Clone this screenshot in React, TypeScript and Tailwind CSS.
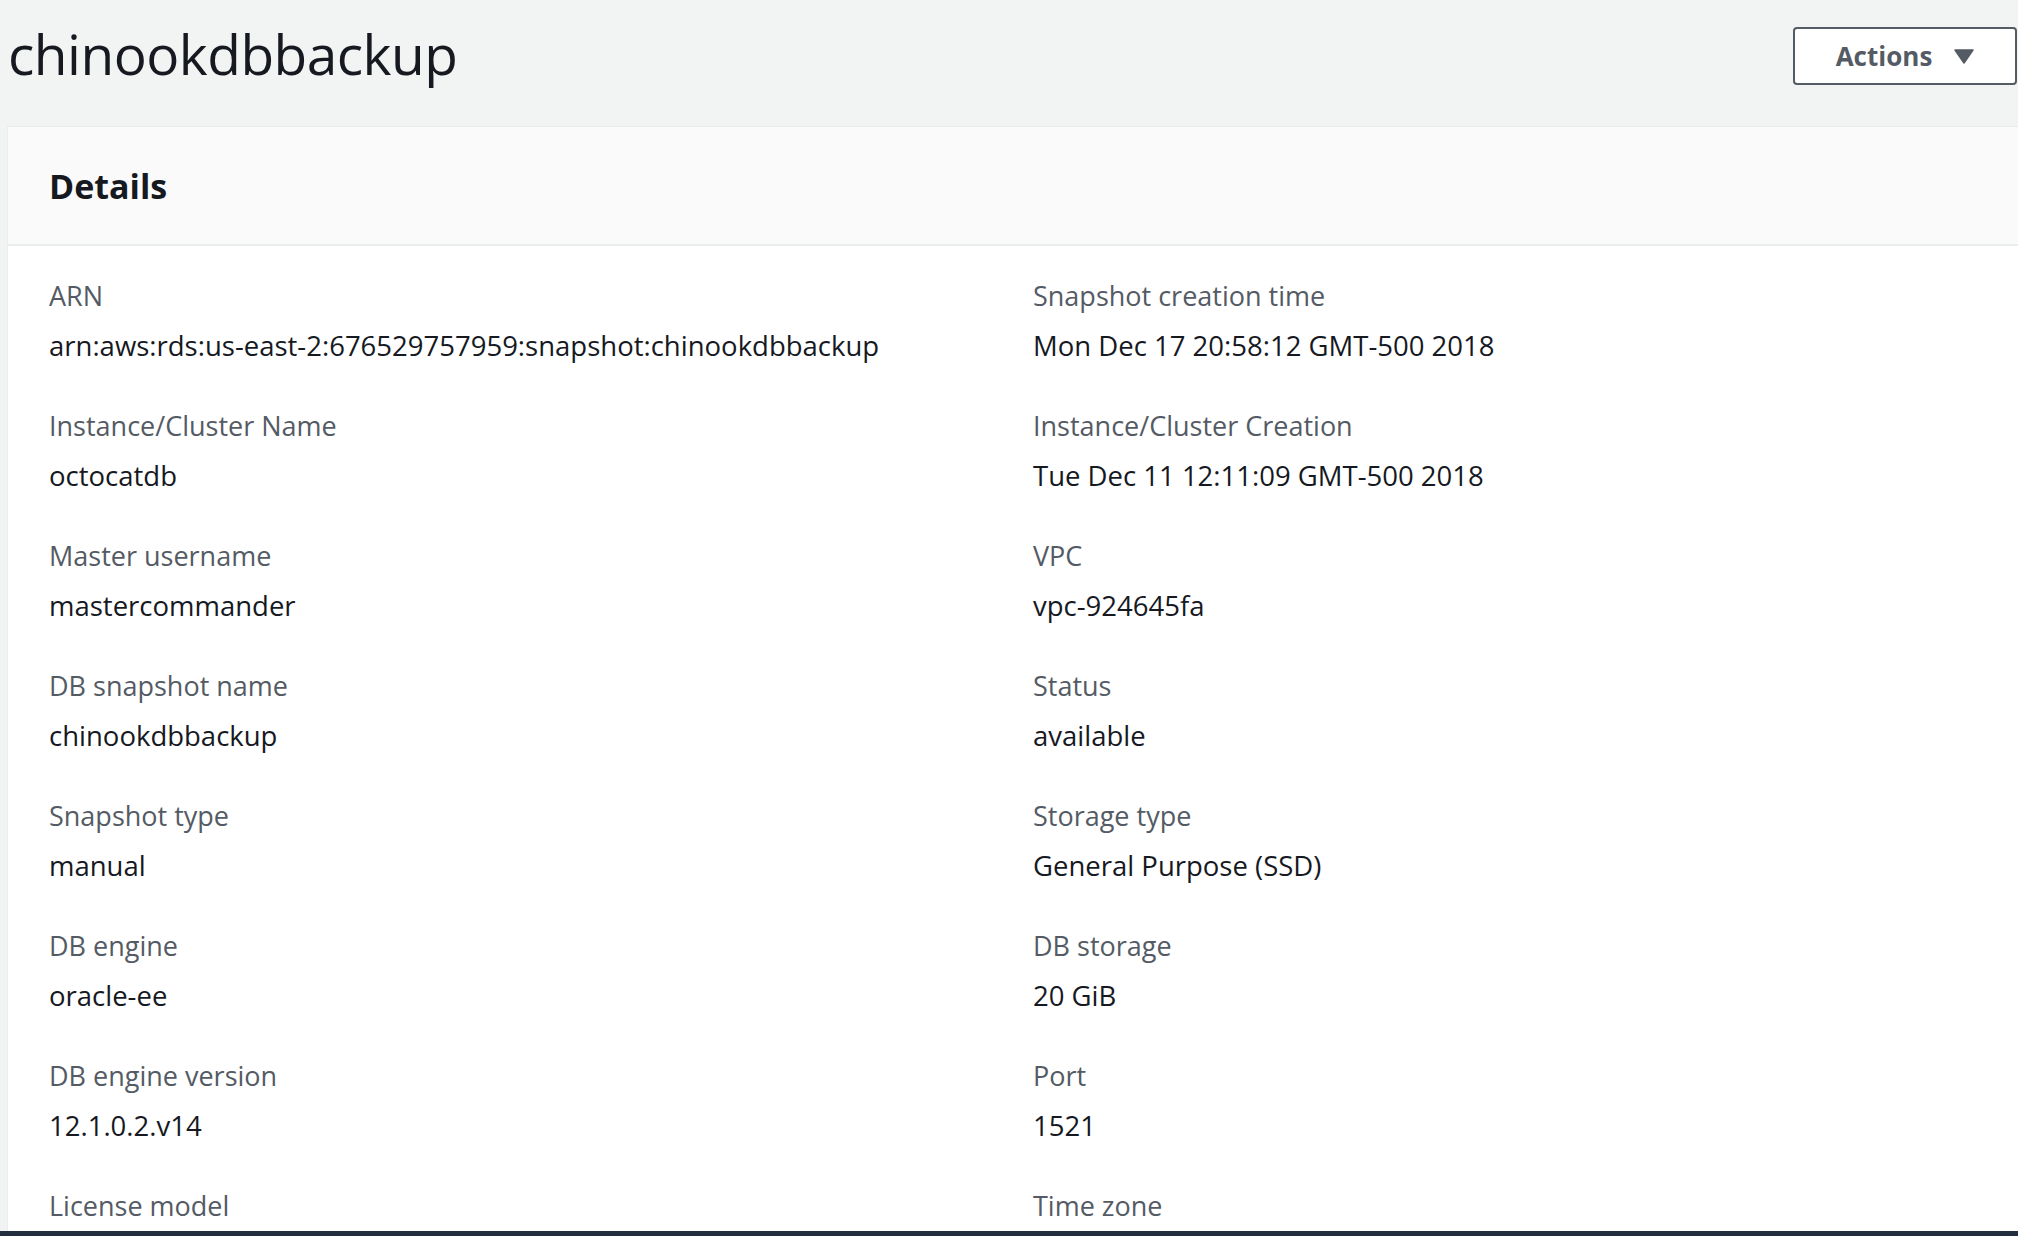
import React from 'react';

type Field = { label: string; value: string };

const left: Field[] = [
  { label: 'ARN', value: 'arn:aws:rds:us-east-2:676529757959:snapshot:chinookdbbackup' },
  { label: 'Instance/Cluster Name', value: 'octocatdb' },
  { label: 'Master username', value: 'mastercommander' },
  { label: 'DB snapshot name', value: 'chinookdbbackup' },
  { label: 'Snapshot type', value: 'manual' },
  { label: 'DB engine', value: 'oracle-ee' },
  { label: 'DB engine version', value: '12.1.0.2.v14' },
  { label: 'License model', value: 'license-included' },
];

const right: Field[] = [
  { label: 'Snapshot creation time', value: 'Mon Dec 17 20:58:12 GMT-500 2018' },
  { label: 'Instance/Cluster Creation', value: 'Tue Dec 11 12:11:09 GMT-500 2018' },
  { label: 'VPC', value: 'vpc-924645fa' },
  { label: 'Status', value: 'available' },
  { label: 'Storage type', value: 'General Purpose (SSD)' },
  { label: 'DB storage', value: '20 GiB' },
  { label: 'Port', value: '1521' },
  { label: 'Time zone', value: '-' },
];

function DetailField({ field }: { field: Field }) {
  return (
    <div className="flex flex-col gap-[14px]">
      <div className="text-[27px] leading-[36px] text-[#545b64]">{field.label}</div>
      <div className="text-[27.5px] leading-[36px] text-[#16191f]">{field.value}</div>
    </div>
  );
}

export default function App() {
  const rows = left.map((l, i) => [l, right[i]] as const);

  return (
    <div
      className="h-[1236px] w-[2018px] overflow-hidden bg-[#f2f3f3] flex flex-col"
      style={{ fontFamily: '"Open Sans", "Noto Sans", Arial, sans-serif' }}
    >
      <div className="h-[126px] flex items-start justify-between shrink-0">
        <h1 className="pl-[8px] pt-[16px] text-[55px] leading-[76px] text-[#16191f] tracking-[-0.5px]">
          chinookdbbackup
        </h1>
        <button className="mt-[27px] mr-[1px] h-[58px] w-[224px] flex items-center justify-center gap-[22px] rounded-[4px] border-2 border-[#545b64] bg-white text-[26px] font-bold text-[#545b64]">
          <span>Actions</span>
          <svg width="20" height="15" viewBox="0 0 20 15">
            <path d="M1 1 L19 1 L10 14 Z" fill="#545b64" stroke="#545b64" strokeWidth="1.5" strokeLinejoin="round" />
          </svg>
        </button>
      </div>

      <div className="ml-[7px] flex-1 flex flex-col bg-white border-l border-t border-[#eaeded] min-h-0">
        <div className="h-[119px] shrink-0 bg-[#fafafa] border-b-2 border-[#eaeded] flex items-center pl-[41px]">
          <h2 className="text-[34px] font-bold text-[#16191f] leading-none">Details</h2>
        </div>
        <div className="pl-[41px] pt-[32px] grid grid-cols-[984px_1fr] gap-y-[44px]">
          {rows.map(([l, r]) => (
            <React.Fragment key={l.label}>
              <DetailField field={l} />
              <DetailField field={r} />
            </React.Fragment>
          ))}
        </div>
      </div>
      <div className="h-[5px] shrink-0 bg-[#232f3e]" />
    </div>
  );
}
